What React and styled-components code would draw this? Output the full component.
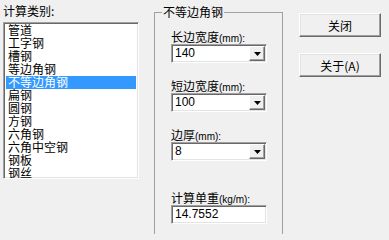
import React, { useState } from "react";
import styled, { createGlobalStyle } from "styled-components";

const GlobalStyle = createGlobalStyle`
  html, body {
    margin: 0;
    padding: 0;
    background: #f0f0f0;
  }
  body {
    font-family: "Liberation Sans", "Noto Sans CJK SC", sans-serif;
    font-size: 12px;
    color: #000;
  }
`;

const items = [
  "管道",
  "工字钢",
  "槽钢",
  "等边角钢",
  "不等边角钢",
  "扁钢",
  "圆钢",
  "方钢",
  "六角钢",
  "六角中空钢",
  "钢板",
  "钢丝",
];

const fields = [
  { label: "长边宽度", unit: "(mm):", value: "140" },
  { label: "短边宽度", unit: "(mm):", value: "100" },
  { label: "边厚", unit: "(mm):", value: "8" },
];

function App() {
  const [selected, setSelected] = useState(4);

  return (
    <>
      <GlobalStyle />
      <Dialog>
        <LeftCol>
          <Label>计算类别:</Label>
          <ListBox>
            {items.map((name, i) => (
              <ListItem
                key={name}
                $active={i === selected}
                onClick={() => setSelected(i)}
              >
                {name}
              </ListItem>
            ))}
          </ListBox>
        </LeftCol>

        <Group>
          <Legend>{items[selected]}</Legend>
          <Fields>
            {fields.map((f) => (
              <Field key={f.label}>
                <Label>
                  {f.label}
                  <Unit>{f.unit}</Unit>
                </Label>
                <Combo>
                  <ComboText>{f.value}</ComboText>
                  <DropButton>
                    <svg width="7" height="4" viewBox="0 0 7 4">
                      <path d="M0 0h7L3.5 4z" fill="#000" />
                    </svg>
                  </DropButton>
                </Combo>
              </Field>
            ))}
            <Field $result>
              <Label>
                计算单重<Unit>(kg/m):</Unit>
              </Label>
              <EditBox>14.7552</EditBox>
            </Field>
          </Fields>
        </Group>

        <Buttons>
          <Button>关闭</Button>
          <Button>关于(A)</Button>
        </Buttons>
      </Dialog>
    </>
  );
}

const Dialog = styled.div`
  display: flex;
  align-items: flex-start;
  padding: 4px 0 0 3px;
  height: 234px;
  box-sizing: border-box;
  overflow: hidden;
`;

const LeftCol = styled.div`
  display: flex;
  flex-direction: column;
  width: 136px;
  flex-shrink: 0;
`;

const Label = styled.div`
  height: 14px;
  line-height: 14px;
  white-space: nowrap;
  font-family: "Noto Sans CJK SC", sans-serif;
  font-size: 12px;
`;

const Unit = styled.span`
  font-family: "Liberation Sans", sans-serif;
  font-size: 10px;
`;

const sunken = `
  border: 1px solid;
  border-color: #a0a0a0 #ffffff #ffffff #a0a0a0;
  box-shadow: inset 1px 1px 0 #696969, inset -1px -1px 0 #e3e3e3;
  background: #fff;
  box-sizing: border-box;
`;

const ListBox = styled.div`
  ${sunken}
  margin-top: 4px;
  height: 157px;
  padding: 1px 2px 0;
  overflow: hidden;
`;

const ListItem = styled.div`
  height: 13px;
  line-height: 12px;
  padding-left: 2px;
  font-family: "Noto Sans CJK SC", sans-serif;
  font-size: 12px;
  white-space: nowrap;
  cursor: default;
  background: ${(p) => (p.$active ? "#3399ff" : "transparent")};
  color: ${(p) => (p.$active ? "#fff" : "#000")};
`;

const Group = styled.fieldset`
  margin: 1px 0 0 15px;
  width: 129px;
  height: 240px;
  flex-shrink: 0;
  box-sizing: border-box;
  border: 1px solid #a0a0a0;
  padding: 11px 0 0 7px;
  min-width: 0;
`;

const Legend = styled.legend`
  padding: 0 1px;
  height: 14px;
  line-height: 14px;
  font-family: "Noto Sans CJK SC", sans-serif;
  font-size: 12px;
`;

const Fields = styled.div`
  display: flex;
  flex-direction: column;
  gap: 16px;
  padding-left: 9px;
`;

const Field = styled.div`
  display: flex;
  flex-direction: column;
  margin-top: ${(p) => (p.$result ? "14px" : "0")};
`;

const Combo = styled.div`
  ${sunken}
  display: flex;
  align-items: stretch;
  width: 96px;
  height: 19px;
  padding: 1px;
`;

const ComboText = styled.div`
  flex: 1;
  padding-left: 2px;
  line-height: 15px;
  font-family: "Liberation Sans", sans-serif;
  font-size: 12px;
`;

const DropButton = styled.div`
  width: 16px;
  display: flex;
  align-items: center;
  justify-content: center;
  background: #f0f0f0;
  box-sizing: border-box;
  border: 1px solid;
  border-color: #ffffff #696969 #696969 #ffffff;
  box-shadow: inset -1px -1px 0 #a0a0a0;
`;

const EditBox = styled.div`
  ${sunken}
  width: 96px;
  height: 19px;
  padding-left: 3px;
  line-height: 17px;
  font-family: "Liberation Sans", sans-serif;
  font-size: 12px;
`;

const Buttons = styled.div`
  display: flex;
  flex-direction: column;
  gap: 16px;
  margin: 9px 0 0 16px;
`;

const Button = styled.button`
  width: 82px;
  height: 24px;
  padding: 0;
  background: #f0f0f0;
  border: 1px solid;
  border-color: #ffffff #696969 #696969 #ffffff;
  box-shadow: inset -1px -1px 0 #a0a0a0, inset 1px 1px 0 #e3e3e3;
  font-family: "Noto Sans CJK SC", "Liberation Sans", sans-serif;
  font-size: 12px;
  color: #000;
  cursor: pointer;

  &:active {
    border-color: #696969 #ffffff #ffffff #696969;
  }
`;

export default App;
